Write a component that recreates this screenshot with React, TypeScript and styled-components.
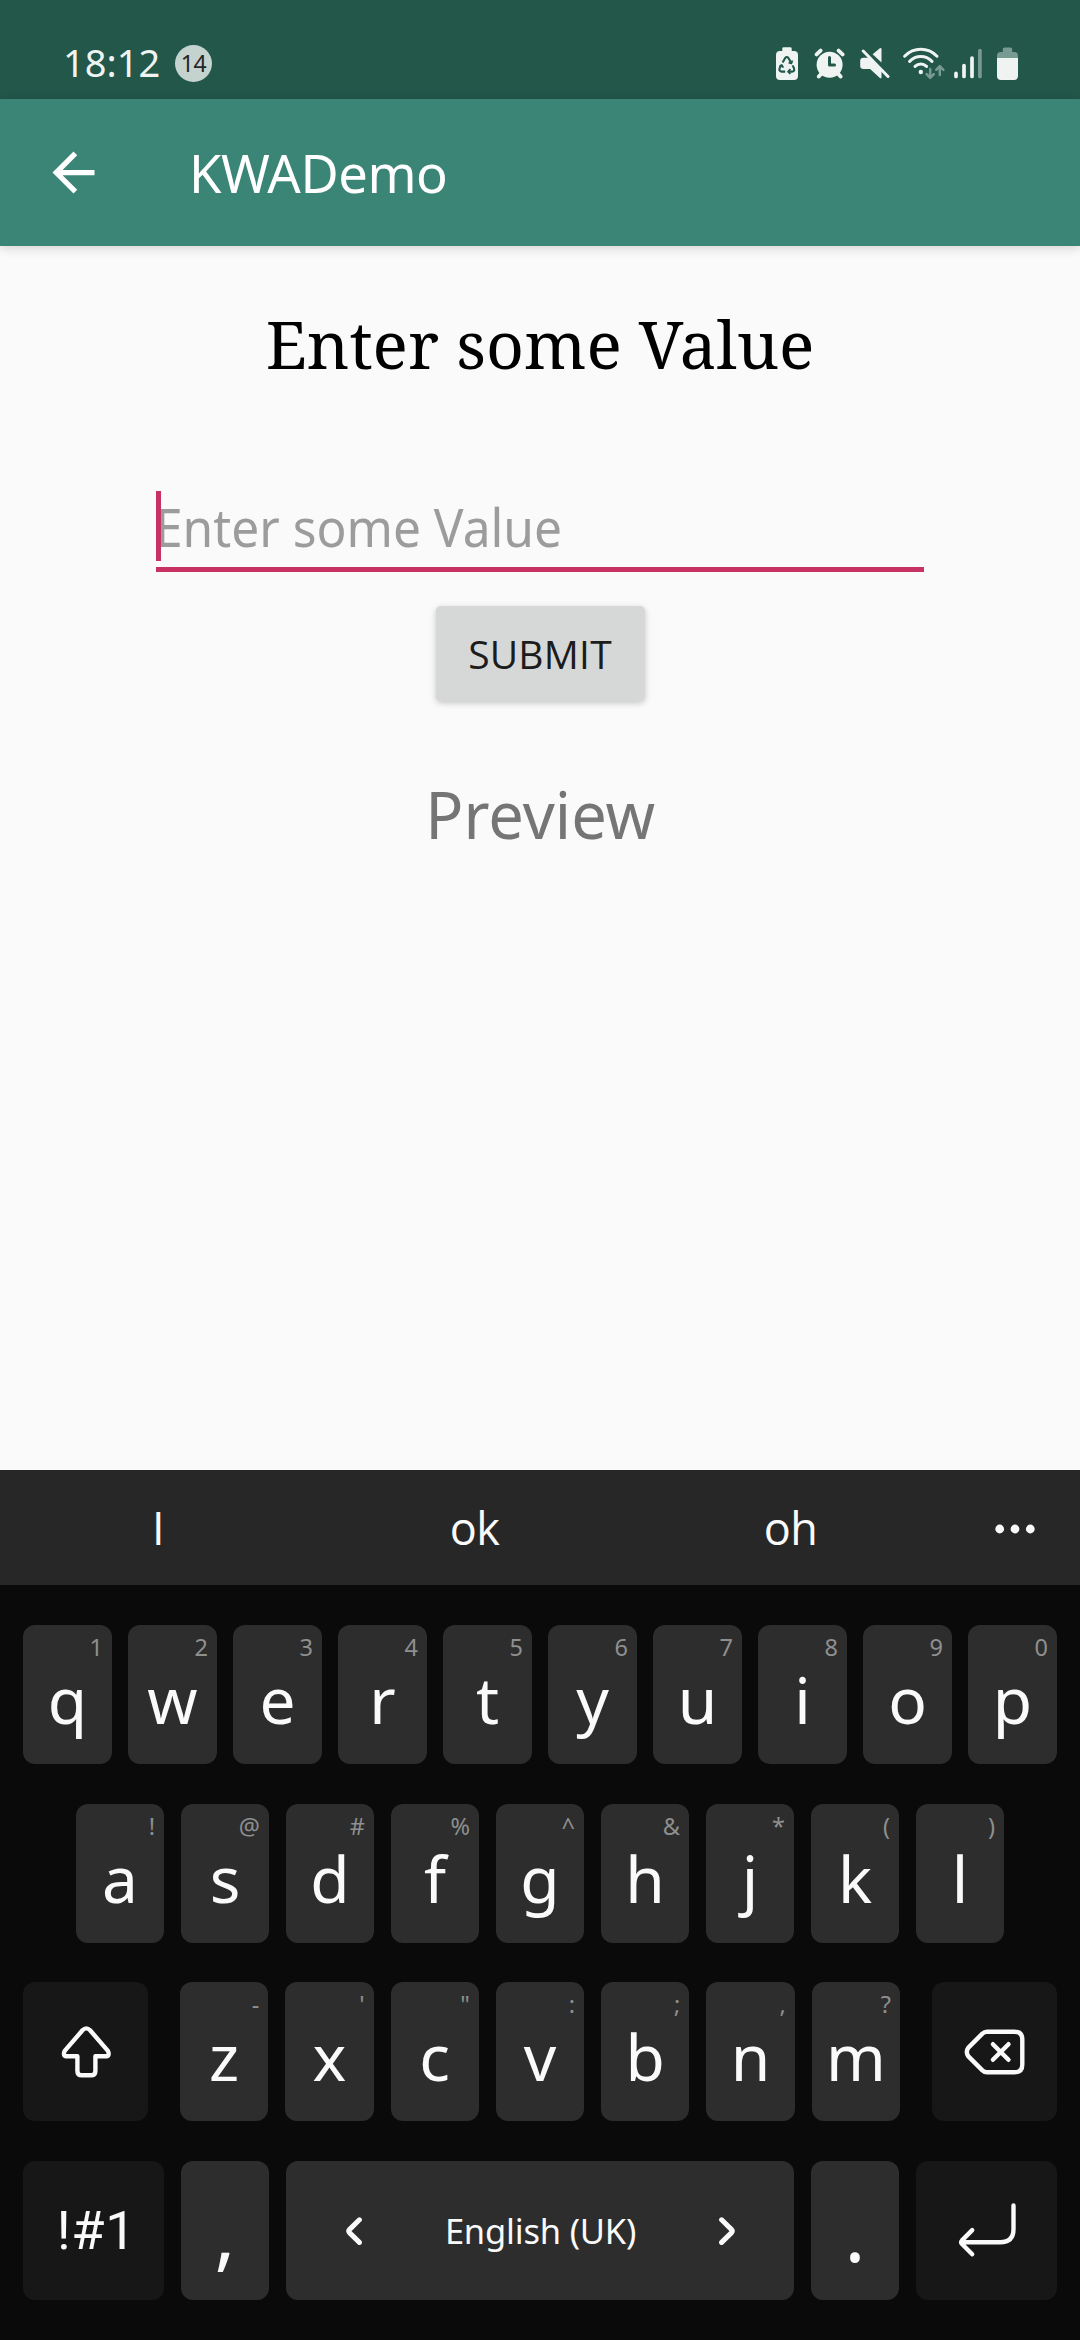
import React from "react";
import styled, { createGlobalStyle } from "styled-components";

const SANS = '"Noto Sans", "Open Sans", sans-serif';
const LABEL_SANS = '"Open Sans", "Noto Sans", sans-serif';
const LIGHT = "#eff4f2";
const DIM = "#799a91";
const STATUS_BG = "#22574a";

const GlobalStyle = createGlobalStyle`
  * { box-sizing: border-box; }
  body { margin: 0; background: #fafafa; font-family: ${SANS}; }
  svg { display: block; flex: none; }
`;

const Screen = styled.div`
  width: 1080px;
  height: 2340px;
  display: flex;
  flex-direction: column;
  overflow: hidden;
  background: #fafafa;
`;

/* ---------- status bar ---------- */

const StatusBar = styled.header`
  height: 99px;
  flex: none;
  padding: 28px 62px 0 63px;
  display: flex;
  align-items: center;
  background: ${STATUS_BG};
`;

const Clock = styled.span`
  width: 112px;
  padding-bottom: 4px;
  font-size: 38px;
  line-height: 50px;
  color: ${LIGHT};
`;

const CountBadge = styled.span`
  width: 37px;
  height: 37px;
  border-radius: 50%;
  display: flex;
  align-items: center;
  justify-content: center;
  background: #c5d3cf;
  color: #262626;
  font-size: 23px;
  line-height: 37px;
  letter-spacing: -0.5px;
`;

const StatusIcons = styled.div`
  margin-left: auto;
  display: flex;
  align-items: center;
`;

const StatusIcon = styled.svg<{ $gap?: number }>`
  height: 36px;
  margin-left: ${(p) => p.$gap ?? 0}px;
`;

/* ---------- app bar ---------- */

const AppBar = styled.div`
  height: 147px;
  flex: none;
  padding-left: 42px;
  display: flex;
  align-items: center;
  gap: 84px;
  background: #3b8577;
  box-shadow: 0 2px 10px rgba(0, 0, 0, 0.16);
`;

const AppTitle = styled.h1`
  margin: 0;
  font-size: 52.5px;
  font-weight: 400;
  line-height: 72px;
  letter-spacing: -0.45px;
  color: #fff;
`;

/* ---------- form ---------- */

const Content = styled.main`
  flex: 1;
  min-height: 0;
  padding-top: 52px;
  display: flex;
  flex-direction: column;
  align-items: center;
`;

const Heading = styled.h2`
  margin: 0 0 103px;
  font-family: "Noto Serif", "Liberation Serif", serif;
  font-size: 66px;
  font-weight: 400;
  line-height: 90px;
  color: #000;
`;

const Field = styled.div`
  width: 768px;
  height: 81px;
  display: flex;
  align-items: flex-start;
  border-bottom: 5px solid #c83262;
`;

const Caret = styled.span`
  width: 5px;
  height: 70px;
  margin-right: -6px;
  background: #c83262;
  z-index: 1;
`;

const Placeholder = styled.span`
  padding-top: 1px;
  font-size: 52.5px;
  line-height: 70px;
  color: #9c9c9c;
  transform: scaleX(0.946);
  transform-origin: left center;
`;

const SubmitButton = styled.button`
  width: 209px;
  height: 95px;
  margin: 34px 0 69px;
  padding: 0;
  border: 0;
  border-radius: 5px;
  background: #d6d8d7;
  box-shadow: 0 2px 6px rgba(0, 0, 0, 0.22);
  font-family: ${LABEL_SANS};
  font-size: 39px;
  line-height: 95px;
  letter-spacing: 0.2px;
  color: #1c1c1c;
`;

const Preview = styled.p`
  margin: 0;
  font-size: 65px;
  line-height: 88px;
  color: #757575;
  transform: scaleX(0.972);
`;

/* ---------- keyboard ---------- */

const Suggestions = styled.div`
  height: 115px;
  flex: none;
  display: grid;
  grid-template-columns: 316px 317px 315px 1fr;
  align-items: center;
  justify-items: center;
  background: #272727;
`;

const Suggestion = styled.span`
  font-family: ${LABEL_SANS};
  font-size: 45px;
  line-height: 60px;
  letter-spacing: -0.6px;
  color: #fafafa;
`;

const More = styled.svg`
  margin-bottom: -2px;
  margin-right: -1px;
`;

const Keyboard = styled.div`
  height: 755px;
  flex: none;
  padding: 40px 23px;
  display: flex;
  flex-direction: column;
  justify-content: space-between;
  background: #0a0a0a;
`;

const KeyRow = styled.div<{ $gap: number; $inset?: number }>`
  display: flex;
  gap: ${(p) => p.$gap}px;
  padding: 0 ${(p) => p.$inset ?? 0}px;
`;

const KeyGroup = styled.div`
  flex: 1;
  display: flex;
  gap: 17px;
  margin: 0 15px;
`;

const Key = styled.div<{ $width?: number; $dark?: boolean }>`
  position: relative;
  height: 139px;
  flex: ${(p) => (p.$width ? `0 0 ${p.$width}px` : "1 1 0")};
  min-width: 0;
  display: flex;
  align-items: center;
  justify-content: center;
  border-radius: 12px;
  background: ${(p) => (p.$dark ? "#171717" : "#2d2d2d")};
  color: #fafafa;
`;

const Letter = styled.span<{ $size?: number; $drop?: number }>`
  padding-top: ${(p) => p.$drop ?? 11}px;
  font-size: ${(p) => p.$size ?? 64}px;
  line-height: 80px;
`;

const SymbolsLabel = styled.span`
  padding: 2px 0 0 6px;
  font-family: Roboto, sans-serif;
  font-size: 54px;
  line-height: 80px;
  letter-spacing: 0.7px;
`;

const AltChar = styled.span`
  position: absolute;
  top: 10px;
  right: 9px;
  font-size: 23.5px;
  line-height: 24px;
  color: #8f8f8f;
`;

const SpaceKey = styled(Key)`
  justify-content: space-between;
  padding: 2px 59px 0 60px;
`;

const Language = styled.span`
  font-size: 34.5px;
  line-height: 48px;
  letter-spacing: -0.2px;
`;

const Stroke = styled.svg<{ $weight?: number }>`
  fill: none;
  stroke: #fafafa;
  stroke-width: ${(p) => p.$weight ?? 4.4}px;
  stroke-linecap: round;
  stroke-linejoin: round;
`;

const topRow = ["q1", "w2", "e3", "r4", "t5", "y6", "u7", "i8", "o9", "p0"];
const homeRow = ["a!", "s@", "d#", "f%", "g^", "h&", "j*", "k(", "l)"];
const bottomRow = ["z-", "x'", 'c"', "v:", "b;", "n,", "m?"];

const renderKey = (pair: string) => (
  <Key key={pair}>
    <AltChar>{pair[1]}</AltChar>
    <Letter>{pair[0]}</Letter>
  </Key>
);

const PowerSavingIcon = () => (
  <StatusIcon viewBox="776 46 22 36" width={22}>
    <path fill={LIGHT} d="M782.3 51v-2.4q0-1.4 1.4-1.4h6.6q1.4 0 1.4 1.4V51h2.3q4 0 4 4v21q0 4-4 4h-14q-4 0-4-4V55q0-4 4-4z" />
    <g fill="none" stroke={STATUS_BG} strokeWidth="2.1" strokeLinejoin="round">
      <path d="M782.6 62.6 785.2 58q1.6-2 3.2 0l2.8 4.8" />
      <path d="M792.6 65.4 794 68.2q1 3.3-2 3.4h-3.4" />
      <path d="M785.2 71.6h-3.6q-3-.4-2-3.3l1.8-3.2" />
      <path d="M790.4 69.2 788 71.6l2.4 2.4M779.4 66.4l2.4-1.4 1.6 2.6M788.6 62.6l2.8.8 1-3" strokeWidth="1.7" />
    </g>
  </StatusIcon>
);

const AlarmIcon = () => (
  <StatusIcon viewBox="814 46 31 36" width={31} $gap={16}>
    <circle cx="829.6" cy="64.7" r="13" fill={LIGHT} />
    <path fill="none" stroke={LIGHT} strokeWidth="3.8" strokeLinecap="round" d="M816.6 54.4l4-3.8M838.6 50.6l4 3.8M821 74l-2.2 2.6M838.4 74l2.2 2.6" />
    <path fill="none" stroke={STATUS_BG} strokeWidth="3" strokeLinecap="round" strokeLinejoin="round" d="M829.5 57.4v7.6h5" />
  </StatusIcon>
);

const MuteIcon = () => (
  <StatusIcon viewBox="860 46 30 36" width={30} $gap={15}>
    <path fill={LIGHT} d="M863.5 57.8h5.2l12.8 13v6.7q-.4 1.4-1.6.5l-9.8-8.9h-6.6q-3.3 0-3.3-3.3v-4.7q0-3.3 3.3-3.3z" />
    <path fill={LIGHT} d="M872.6 54.2l7-5.8q1.9-.9 1.9 1v13.2z" />
    <path fill="none" stroke={LIGHT} strokeWidth="3" strokeLinecap="round" d="M863.2 51l24.8 25.5" />
  </StatusIcon>
);

const WifiIcon = () => (
  <StatusIcon viewBox="902 46 44 36" width={44} $gap={12}>
    <g fill="none" stroke={LIGHT} strokeWidth="3" strokeLinecap="round">
      <path d="M904.6 56.2q7-6.9 16.2-6.9t16.2 6.9" />
      <path d="M909.6 61.4q4.8-4.9 11.2-4.9t11.2 4.9" />
      <path d="M915 66.4q2.6-2.5 5.8-2.5t5.8 2.5" />
    </g>
    <circle cx="920.8" cy="72" r="2.2" fill={LIGHT} />
    <path fill="none" stroke={DIM} strokeWidth="2.5" strokeLinecap="round" strokeLinejoin="round" d="M930.2 69v8.6m-3.6-3.4 3.6 3.6 3.6-3.6M939.8 75v-8.6m-3.6 3.4 3.6-3.6 3.6 3.6" />
  </StatusIcon>
);

const SignalIcon = () => (
  <StatusIcon viewBox="954 46 28 36" width={28} $gap={8}>
    <g fill="none" stroke={LIGHT} strokeWidth="3.7" strokeLinecap="round">
      <path d="M956 73.4v3M964 65.6v10.8M972 58v18.4" />
      <path stroke={DIM} d="M979.9 50.6v25.8" />
    </g>
  </StatusIcon>
);

const BatteryIcon = () => (
  <StatusIcon viewBox="997 46 21 36" width={21} $gap={15}>
    <path fill={DIM} d="M1002.8 52v-3q0-1.6 1.6-1.6h6.2q1.6 0 1.6 1.6v3h2q3.8 0 3.8 3.8V58h-21v-2.2q0-3.8 3.8-3.8z" />
    <path fill={LIGHT} d="M997 58h21v18q0 4-4 4h-13q-4 0-4-4z" />
  </StatusIcon>
);

export default function App() {
  return (
    <Screen>
      <GlobalStyle />
      <StatusBar>
        <Clock>18:12</Clock>
        <CountBadge>14</CountBadge>
        <StatusIcons>
          <PowerSavingIcon />
          <AlarmIcon />
          <MuteIcon />
          <WifiIcon />
          <SignalIcon />
          <BatteryIcon />
        </StatusIcons>
      </StatusBar>
      <AppBar>
        <svg width="63" height="63" viewBox="0 0 24 24" fill="#fff">
          <path d="M20 11H7.83l5.59-5.59L12 4l-8 8 8 8 1.41-1.41L7.83 13H20v-2z" />
        </svg>
        <AppTitle>KWADemo</AppTitle>
      </AppBar>
      <Content>
        <Heading>Enter some Value</Heading>
        <Field>
          <Caret />
          <Placeholder>Enter some Value</Placeholder>
        </Field>
        <SubmitButton>SUBMIT</SubmitButton>
        <Preview>Preview</Preview>
      </Content>
      <Suggestions>
        <Suggestion>I</Suggestion>
        <Suggestion>ok</Suggestion>
        <Suggestion>oh</Suggestion>
        <More width="40" height="10" viewBox="0 0 40 10" fill="#fafafa">
          <circle cx="4.7" cy="5" r="4.4" />
          <circle cx="20" cy="5" r="4.4" />
          <circle cx="35.3" cy="5" r="4.4" />
        </More>
      </Suggestions>
      <Keyboard>
        <KeyRow $gap={16}>{topRow.map(renderKey)}</KeyRow>
        <KeyRow $gap={17} $inset={53}>{homeRow.map(renderKey)}</KeyRow>
        <KeyRow $gap={17}>
          <Key $width={125} $dark>
            <Stroke width="56" height="56" viewBox="57.5 2023.5 56 56">
              <path d="M82 2029.8q3.8-3.8 7.6 0L107.4 2050.4q2.4 5.4-2.6 5.4H94.9v14.6q0 4.4-4.4 4.4h-9.2q-4.4 0-4.4-4.4v-14.6H66.8q-5 0-2.6-5.4z" />
            </Stroke>
          </Key>
          <KeyGroup>{bottomRow.map(renderKey)}</KeyGroup>
          <Key $width={125} $dark>
            <Stroke width="66" height="50" viewBox="961.5 2026.5 66 50">
              <path d="M986.5 2031.2H1014q7.8 0 7.8 7.8v25q0 7.8-7.8 7.8h-27.5q-2.6 0-4.6-1.9l-14-14q-3.2-4.4 0-8.8l14-14q2-1.9 4.6-1.9z" />
              <path d="M992.4 2043.7l15.6 15.6M1008 2043.7l-15.6 15.6" />
            </Stroke>
          </Key>
        </KeyRow>
        <KeyRow $gap={17}>
          <Key $width={141} $dark>
            <SymbolsLabel>!#1</SymbolsLabel>
          </Key>
          <Key $width={88}>
            <Letter $size={78} $drop={3}>,</Letter>
          </Key>
          <SpaceKey>
            <Stroke width="18" height="32" viewBox="0 0 18 32" $weight={5}>
              <path d="M13.4 4.8 3.4 14.6q-1.3 1.5 0 3l10 9.8" />
            </Stroke>
            <Language>English (UK)</Language>
            <Stroke width="18" height="32" viewBox="0 0 18 32" $weight={5}>
              <path d="M4.6 4.8l10 9.8q1.3 1.5 0 3l-10 9.8" />
            </Stroke>
          </SpaceKey>
          <Key $width={88}>
            <Letter $size={78} $drop={3}>.</Letter>
          </Key>
          <Key $width={141} $dark>
            <Stroke width="60" height="56" viewBox="956.5 2202.5 60 56">
              <path d="M1013 2206v23.5q0 13.2-13.2 13.2H961.5M971.7 2230.6l-10.2 10.3q-1.7 1.8 0 3.6l10.2 10.3" />
            </Stroke>
          </Key>
        </KeyRow>
      </Keyboard>
    </Screen>
  );
}
